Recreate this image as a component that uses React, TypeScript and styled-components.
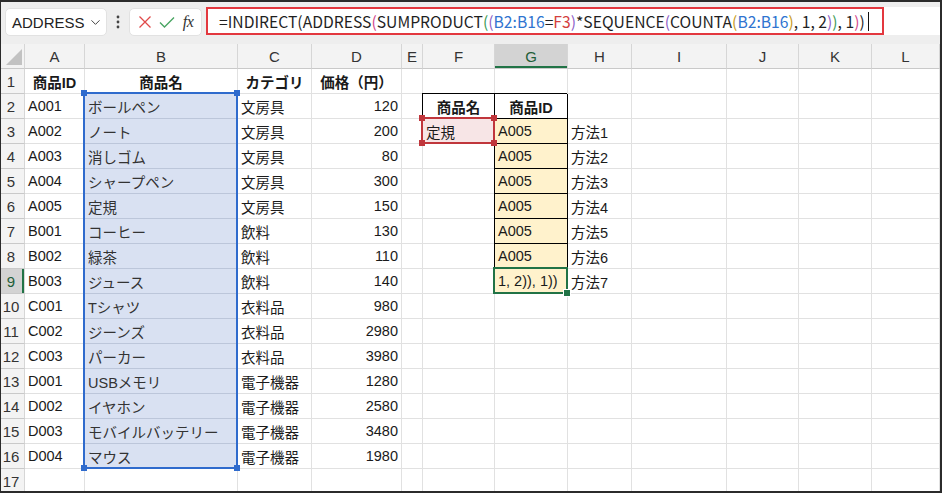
import React from 'react';
import styled, { createGlobalStyle, css } from 'styled-components';
import { ChevronDown } from 'lucide-react';

const GlobalStyle = createGlobalStyle`
  html, body { margin: 0; padding: 0; background: #2b2b2b; }
  body { width: 942px; height: 493px; overflow: hidden; }
  * { box-sizing: border-box; }
`;

const CELL_FONT = '"Liberation Sans", "Noto Sans CJK JP", sans-serif';
const UI_FONT = '"Noto Sans CJK JP", "Liberation Sans", sans-serif';

// row header + A..L
const COLS = [24, 60, 153, 74, 90, 21, 72, 73, 64, 95, 72, 73, 68];
const LETTERS = ['A', 'B', 'C', 'D', 'E', 'F', 'G', 'H', 'I', 'J', 'K', 'L'];
const HEAD_H = 25;
const ROW_H = 25;
const ACTIVE_COL = 7; // G
const ACTIVE_ROW = 9;

const colLeft = (i: number) => COLS.slice(0, i).reduce((a, b) => a + b, 0);
const rowTop = (r: number) => HEAD_H + (r - 1) * ROW_H;

type Tone = 'blue' | 'pink' | 'yellow';
type Spec = { text?: string; align?: 'left' | 'right' | 'center'; bold?: boolean; tone?: Tone; boxed?: boolean };

const products: [string, string, string, number][] = [
  ['A001', 'ボールペン', '文房具', 120],
  ['A002', 'ノート', '文房具', 200],
  ['A003', '消しゴム', '文房具', 80],
  ['A004', 'シャープペン', '文房具', 300],
  ['A005', '定規', '文房具', 150],
  ['B001', 'コーヒー', '飲料', 130],
  ['B002', '緑茶', '飲料', 110],
  ['B003', 'ジュース', '飲料', 140],
  ['C001', 'Tシャツ', '衣料品', 980],
  ['C002', 'ジーンズ', '衣料品', 2980],
  ['C003', 'パーカー', '衣料品', 3980],
  ['D001', 'USBメモリ', '電子機器', 1280],
  ['D002', 'イヤホン', '電子機器', 2580],
  ['D003', 'モバイルバッテリー', '電子機器', 3480],
  ['D004', 'マウス', '電子機器', 1980],
];

function buildRow(r: number): Spec[] {
  const row: Spec[] = LETTERS.map(() => ({}));
  if (r === 1) {
    ['商品ID', '商品名', 'カテゴリ', '価格（円）'].forEach((t, i) => {
      row[i] = { text: t, align: 'center', bold: true };
    });
  } else if (r <= 16) {
    const [id, name, cat, price] = products[r - 2];
    row[0] = { text: id };
    row[1] = { text: name, tone: 'blue' };
    row[2] = { text: cat };
    row[3] = { text: String(price), align: 'right' };
  }
  if (r === 2) {
    row[5] = { text: '商品名', align: 'center', bold: true, boxed: true };
    row[6] = { text: '商品ID', align: 'center', bold: true, boxed: true };
  }
  if (r === 3) row[5] = { text: '定規', tone: 'pink' };
  if (r >= 3 && r <= 9) {
    row[6] = { text: r === 9 ? '1, 2)), 1))' : 'A005', tone: 'yellow', boxed: true };
    row[7] = { text: `方法${r - 2}` };
  }
  return row;
}

const P0 = '#1f1f1f';
const P1 = '#d2468c';
const P2 = '#3d9a55';
const P3 = '#8d5ec8';
const P4 = '#c79a22';
const REF_BLUE = '#2f74d0';
const REF_RED = '#d43f3f';

const formula: [string, string][] = [
  ['=INDIRECT', P0], ['(', P0], ['ADDRESS', P0], ['(', P1], ['SUMPRODUCT', P0], ['(', P2], ['(', P3],
  ['B2:B16', REF_BLUE], ['=', P0], ['F3', REF_RED], [')', P3], ['*SEQUENCE', P0], ['(', P3],
  ['COUNTA', P0], ['(', P4], ['B2:B16', REF_BLUE], [')', P4], [', 1, 2', P0], [')', P3], [')', P2],
  [', 1', P0], [')', P1], [')', P0],
];

const Frame = styled.div`
  width: 942px;
  height: 493px;
  background: #2b2b2b;
  padding: 2px 2px 2px 1px;
  display: flex;
  flex-direction: column;
`;

const Window = styled.div`
  flex: 1;
  background: #fff;
  display: flex;
  flex-direction: column;
  overflow: hidden;
`;

const Toolbar = styled.div`
  height: 42px;
  flex: none;
  background: #eeeeee;
  display: flex;
  align-items: flex-start;
  padding: 5px 0 0 4px;
  font-family: ${UI_FONT};
`;

const NameBox = styled.div`
  width: 102px;
  height: 28px;
  margin-top: 1px;
  background: #fff;
  border: 1px solid #e2e2e2;
  border-radius: 5px;
  display: flex;
  align-items: center;
  justify-content: space-between;
  padding: 0 3px 0 6px;
  font-size: 15px;
  color: #222;
  font-family: ${CELL_FONT};
`;

const Dots = styled.div`
  width: 22px;
  height: 28px;
  display: flex;
  align-items: center;
  justify-content: center;
  margin-top: 1px;
`;

const IconBox = styled.div`
  width: 73px;
  height: 28px;
  margin-top: 1px;
  background: #fff;
  border: 1px solid #e2e2e2;
  border-radius: 5px;
  display: flex;
  align-items: center;
  justify-content: space-around;
  padding: 0 4px;
`;

const Fx = styled.span`
  font-family: "Liberation Serif", serif;
  font-style: italic;
  font-size: 16px;
  color: #333;
  letter-spacing: -0.5px;
`;

const FormulaBar = styled.div`
  flex: 1;
  height: 28px;
  margin-left: 4px;
  background: #fff;
  display: flex;
`;

const Highlight = styled.div`
  width: 678px;
  height: 28px;
  border: 2px solid #e3383f;
  display: flex;
  align-items: center;
  padding-left: 11px;
  font-size: 15.7px;
  white-space: nowrap;
`;

const Caret = styled.span`
  width: 1px;
  height: 19px;
  background: #111;
  margin-left: 3px;
`;

const Sheet = styled.div`
  position: relative;
  flex: 1;
  display: grid;
  grid-template-columns: ${COLS.map((w) => `${w}px`).join(' ')};
  grid-auto-rows: ${ROW_H}px;
  overflow: hidden;
  font-family: ${CELL_FONT};
  font-size: 14.5px;
`;

const HeadCell = styled.div<{ $active?: boolean; $side?: boolean }>`
  background: ${(p) => (p.$active ? '#d3d3d3' : '#f3f3f3')};
  border-right: 1px solid #d6d6d6;
  border-bottom: 1px solid #c9c9c9;
  display: flex;
  align-items: center;
  justify-content: center;
  padding-right: ${(p) => (p.$side ? '3px' : '0')};
  color: ${(p) => (p.$active ? '#1e5e38' : '#333')};
  font-size: 15px;
  ${(p) =>
    p.$active &&
    (p.$side
      ? css`box-shadow: inset -2px 0 0 #217346;`
      : css`box-shadow: inset 0 -2px 0 #217346;`)}
`;

const Corner = styled(HeadCell)`
  align-items: flex-end;
  justify-content: flex-end;
  padding: 0 2px 3px 0;
`;

const toneBg: Record<Tone, string> = { blue: '#d9e1f2', pink: '#f7e5e6', yellow: '#fff2cc' };

const Cell = styled.div<{ $align?: string; $bold?: boolean; $tone?: Tone; $boxed?: boolean }>`
  border-right: 1px solid #e1e1e1;
  border-bottom: 1px solid #e1e1e1;
  padding: 0 3px;
  display: flex;
  align-items: center;
  justify-content: ${(p) => (p.$align === 'right' ? 'flex-end' : p.$align === 'center' ? 'center' : 'flex-start')};
  font-weight: ${(p) => (p.$bold ? 700 : 400)};
  white-space: nowrap;
  overflow: hidden;
  color: ${(p) => (p.$tone === 'blue' ? '#333' : '#1a1a1a')};
  background: ${(p) => (p.$tone ? toneBg[p.$tone] : '#fff')};
  ${(p) => p.$tone === 'blue' && css`border-bottom-color: #bcc6da; border-right-color: #bcc6da;`}
  ${(p) => p.$boxed && css`border-right-color: #000; border-bottom-color: #000; box-shadow: -1px -1px 0 0 #000;`}
`;

const RangeBox = styled.div<{ $x: number; $y: number; $w: number; $h: number; $color: string }>`
  position: absolute;
  left: ${(p) => p.$x}px;
  top: ${(p) => p.$y}px;
  width: ${(p) => p.$w}px;
  height: ${(p) => p.$h}px;
  border: 2px solid ${(p) => p.$color};
  pointer-events: none;
`;

const Handle = styled.span<{ $color: string; $pos: 'tl' | 'tr' | 'bl' | 'br' }>`
  position: absolute;
  width: 6px;
  height: 6px;
  background: ${(p) => p.$color};
  ${(p) => (p.$pos[0] === 't' ? 'top: -4px;' : 'bottom: -4px;')}
  ${(p) => (p.$pos[1] === 'l' ? 'left: -4px;' : 'right: -4px;')}
`;

const FillHandle = styled.span`
  position: absolute;
  width: 6px;
  height: 6px;
  right: -4px;
  bottom: -4px;
  background: #217346;
  outline: 1px solid #fff;
`;

function Range({ c1, c2, r1, r2, color, handles, fill }: { c1: number; c2: number; r1: number; r2: number; color: string; handles?: boolean; fill?: boolean }) {
  const x = colLeft(c1) - 2;
  const y = rowTop(r1) - 2;
  const w = colLeft(c2 + 1) - colLeft(c1) + 2;
  const h = (r2 - r1 + 1) * ROW_H + 2;
  return (
    <RangeBox $x={x} $y={y} $w={w} $h={h} $color={color}>
      {handles && (['tl', 'tr', 'bl', 'br'] as const).map((pos) => <Handle key={pos} $color={color} $pos={pos} />)}
      {fill && <FillHandle />}
    </RangeBox>
  );
}

export default function App() {
  const rows = Array.from({ length: 17 }, (_, i) => i + 1);
  return (
    <>
      <GlobalStyle />
      <Frame>
        <Window>
          <Toolbar>
            <NameBox>
              ADDRESS
              <ChevronDown size={15} strokeWidth={1.6} color="#444" />
            </NameBox>
            <Dots>
              <svg width="4" height="14" viewBox="0 0 4 14">
                <circle cx="2" cy="2" r="1.4" fill="#444" />
                <circle cx="2" cy="7" r="1.4" fill="#444" />
                <circle cx="2" cy="12" r="1.4" fill="#444" />
              </svg>
            </Dots>
            <IconBox>
              <svg width="14" height="14" viewBox="0 0 14 14">
                <path d="M1.5 1.5 L12.5 12.5 M12.5 1.5 L1.5 12.5" stroke="#e04a4a" strokeWidth="1.3" fill="none" />
              </svg>
              <svg width="16" height="14" viewBox="0 0 16 14">
                <path d="M1 7.5 L5.5 12 L15 2.5" stroke="#4aa564" strokeWidth="1.4" fill="none" />
              </svg>
              <Fx>fx</Fx>
            </IconBox>
            <FormulaBar>
              <Highlight>
                {formula.map(([t, c], i) => (
                  <span key={i} style={{ color: c }}>{t}</span>
                ))}
                <Caret />
              </Highlight>
            </FormulaBar>
          </Toolbar>
          <Sheet>
            <Corner>
              <svg width="16" height="16" viewBox="0 0 16 16">
                <polygon points="16,0 16,16 0,16" fill="#c2c2c2" />
              </svg>
            </Corner>
            {LETTERS.map((l, i) => (
              <HeadCell key={l} $active={i + 1 === ACTIVE_COL}>{l}</HeadCell>
            ))}
            {rows.map((r) => (
              <React.Fragment key={r}>
                <HeadCell $side $active={r === ACTIVE_ROW}>{r}</HeadCell>
                {buildRow(r).map((s, i) => (
                  <Cell key={i} $align={s.align} $bold={s.bold} $tone={s.tone} $boxed={s.boxed}>
                    {s.text}
                  </Cell>
                ))}
              </React.Fragment>
            ))}
            <Range c1={2} c2={2} r1={2} r2={16} color="#2f6bcd" handles />
            <Range c1={6} c2={6} r1={3} r2={3} color="#c0363c" handles />
            <Range c1={7} c2={7} r1={9} r2={9} color="#217346" fill />
          </Sheet>
        </Window>
      </Frame>
    </>
  );
}
